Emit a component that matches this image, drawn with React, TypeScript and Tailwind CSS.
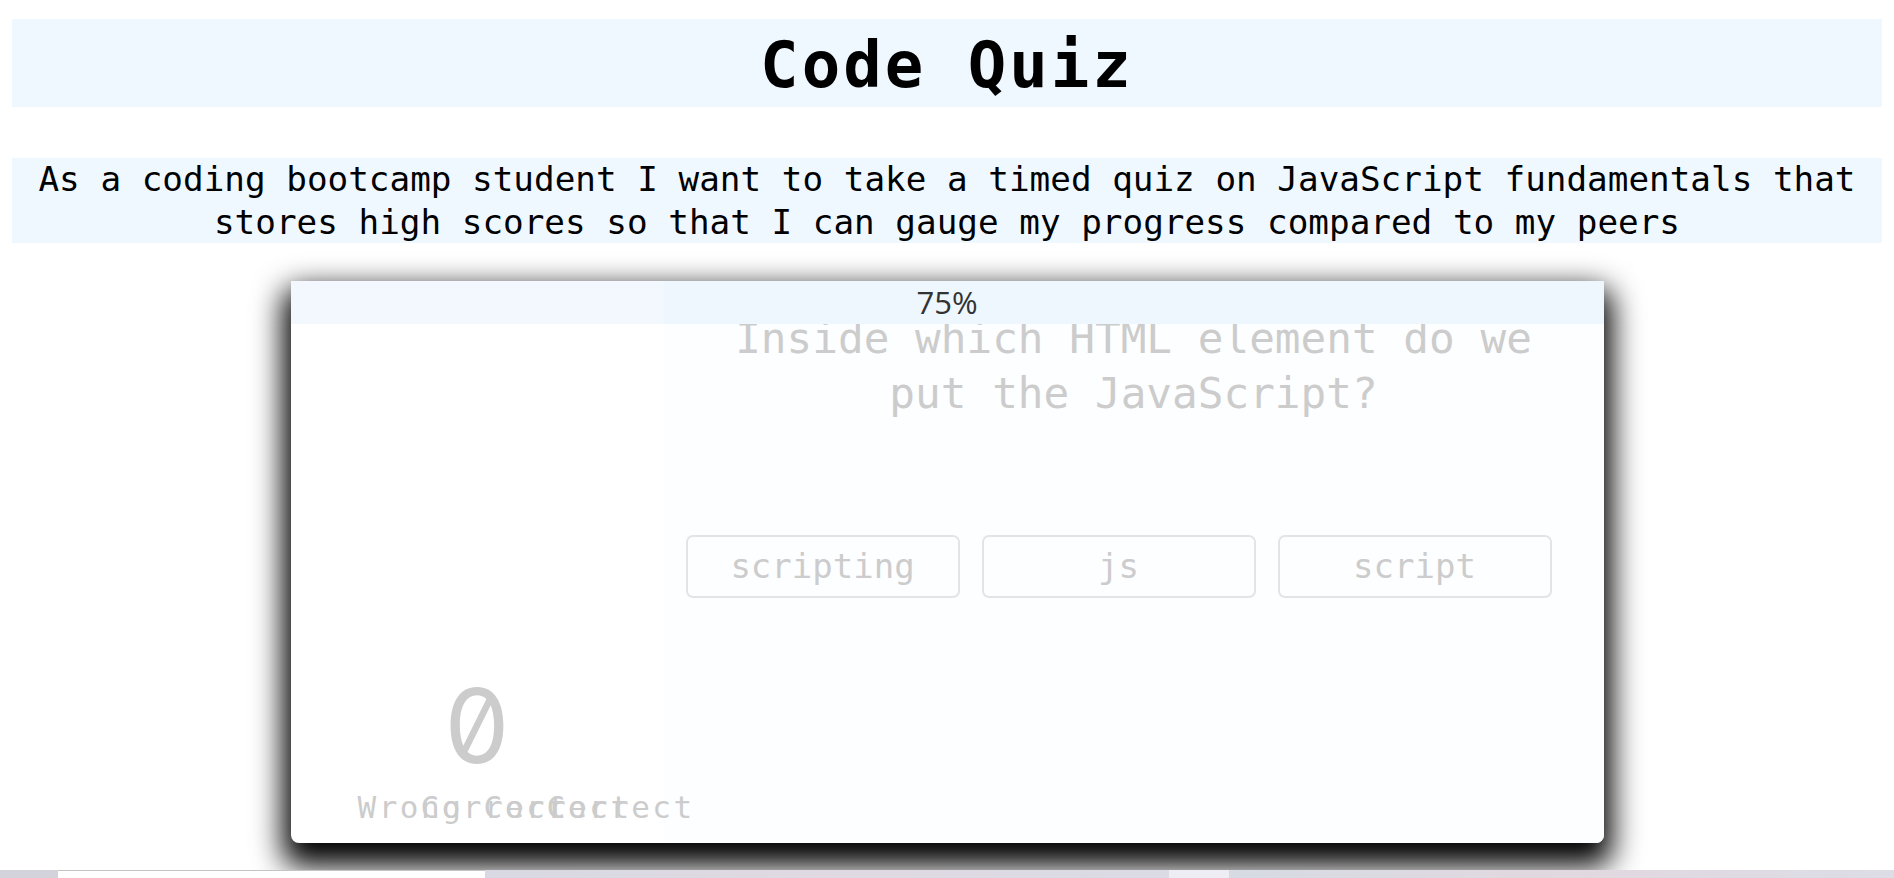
import React from "react";

const quiz = {
  title: "Code Quiz",
  story:
    "As a coding bootcamp student I want to take a timed quiz on JavaScript fundamentals that stores high scores so that I can gauge my progress compared to my peers",
  progress: 75,
  question: "Inside which HTML element do we put the JavaScript?",
  choices: ["scripting", "js", "script"],
  score: 0,
};

// feedback labels left behind mid-animation, offset by 3 chars each
const labels = [
  { text: "Wrong", left: "left-[67px]" },
  { text: "Correct", left: "left-[130px]" },
  { text: "Correct", left: "left-[193px]" },
  { text: "Correct", left: "left-[256px]" },
];

export default function App() {
  return (
    <div className="flex h-[878px] flex-col overflow-hidden bg-white font-['DejaVu_Sans_Mono',monospace] text-black">
      <header className="mx-[12px] mt-[19px] flex h-[88px] items-center justify-center bg-[#f0f8ff] pt-[4px]">
        <h1 className="text-[64px] font-bold leading-none tracking-[3px]">
          {quiz.title}
        </h1>
      </header>

      <p className="mx-[12px] mt-[51px] bg-[#f0f8ff] text-center text-[34.3px] leading-[42.5px]">
        {quiz.story}
      </p>

      <main className="relative mx-auto mt-[38px] flex h-[562px] w-[1313px] rounded-lg bg-white shadow-[0_15px_30px_8px_rgba(0,0,0,1)]">
        <div className="absolute inset-x-0 top-0 flex h-[43px]">
          <div className="w-[373px] bg-[#f3f8fe]" />
          <div className="flex-1 bg-[#eef6fe]" />
          <span className="absolute inset-0 flex items-center justify-center font-['Open_Sans',sans-serif] text-[31px] leading-none text-[#333333]">
            {quiz.progress}%
          </span>
        </div>

        <section className="flex w-[373px] flex-col items-center justify-end pb-[20px] text-[#cccccc]">
          <div className="font-['Inter',sans-serif] text-[103px] leading-none slashed-zero">
            {quiz.score}
          </div>
          <div className="relative mt-[15px] h-[31px] w-full">
            {labels.map((l, i) => (
              <span
                key={i}
                className={`absolute top-0 ${l.left} text-[31px] leading-none tracking-[2.5px] whitespace-nowrap`}
              >
                {l.text}
              </span>
            ))}
          </div>
        </section>

        <section className="flex flex-1 flex-col rounded-br-lg bg-[#fdfeff] pt-[30px]">
          <h2 className="px-[40px] text-center text-[42.7px] leading-[54.5px] text-[#cccccc]">
            {quiz.question}
          </h2>
          <div className="mt-[115px] flex gap-[22px] pl-[22px]">
            {quiz.choices.map((c) => (
              <button
                key={c}
                className="h-[63px] w-[274px] rounded-[7px] border-2 border-[#e4e4e4] bg-transparent text-[34px] text-[#cccccc]"
              >
                {c}
              </button>
            ))}
          </div>
        </section>
      </main>

      <footer className="relative mt-auto flex h-[8px]">
        <div className="w-[58px] bg-[#d3d3db]" />
        <div className="w-[427px] border-t border-[#c4c4c8] bg-white" />
        <div className="w-[684px] bg-gradient-to-r from-[#d8d9e3] via-[#e0d9e1] to-[#dadbe5]" />
        <div className="w-[60px] bg-[#ededf3]" />
        <div className="flex-1 bg-gradient-to-r from-[#d6dbe3] via-[#e2d8df] to-[#dcdde6]" />
      </footer>
    </div>
  );
}
